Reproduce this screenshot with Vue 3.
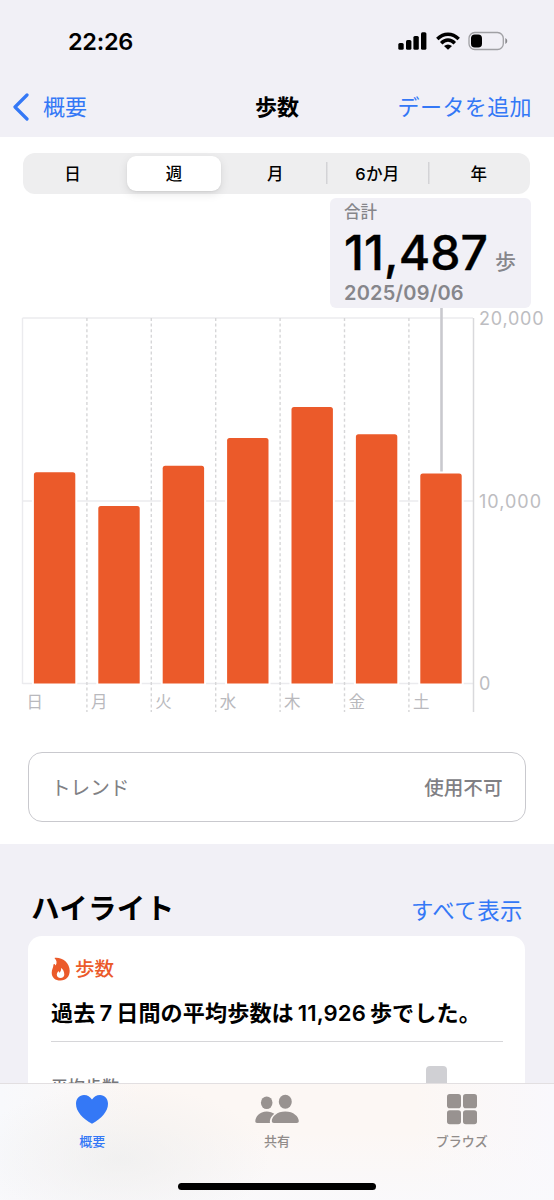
<script setup>
const ranges = ['日', '週', '月', '6か月', '年']
const days = [
  { name: '日', steps: 11560 },
  { name: '月', steps: 9710 },
  { name: '火', steps: 11920 },
  { name: '水', steps: 13440 },
  { name: '木', steps: 15130 },
  { name: '金', steps: 13640 },
  { name: '土', steps: 11487 },
]
const baseline = 375.5
const slot = 64.4
const left = 22.5
const bars = days.map((d, i) => {
  const h = (d.steps / 20000) * 365.5
  const x = left + 11.4 + i * slot
  const y = baseline - h
  return {
    ...d,
    grid: left + i * slot,
    x,
    y,
    path: `M${x} ${baseline}V${y + 2.5}q0-2.5 2.5-2.5h36.4q2.5 0 2.5 2.5V${baseline}z`,
  }
})
</script>

<template>
  <div class="screen">
    <header class="top">
      <div class="status">
        <span class="clock">22:26</span>
        <div class="indicators">
          <svg width="30" height="18" viewBox="0 0 30 18">
            <rect x="0.3" y="11" width="5.400" height="6.800" rx="1.500" />
            <rect x="8" y="8" width="5.400" height="9.800" rx="1.500" />
            <rect x="15.400" y="4" width="5.400" height="13.800" rx="1.500" />
            <rect x="23" y="0.3" width="5.400" height="17.500" rx="1.500" />
          </svg>
          <svg class="wifi" width="24" height="18" viewBox="0 0 24 18">
            <path d="M1.300 7Q6.100 2.200 12 2.200T22.700 7M5.200 11.200Q8.300 8 12 8t6.800 3.200" fill="none" stroke="#000" stroke-width="3.400" />
            <path d="M8 14Q9.900 12.400 12 12.400T16 14l-4 3.800z" />
          </svg>
          <svg width="40" height="20" viewBox="0 0 40 20">
            <rect x="1" y="1.500" width="34.300" height="17" rx="5.800" fill="none" stroke="#a0a0a4" stroke-width="1.300" />
            <rect x="3" y="3.500" width="11" height="13" rx="3.800" />
            <path d="M37.300 7q2 1 2 3t-2 3z" fill="#88888c" />
          </svg>
        </div>
      </div>
      <nav class="nav">
        <a class="back">
          <svg width="18" height="28" viewBox="0 0 18 28"><path d="M15 2L3 14l12 12" fill="none" stroke="#3478f6" stroke-width="3.200" stroke-linecap="round" stroke-linejoin="round" /></svg>
          <span>概要</span>
        </a>
        <h1>歩数</h1>
        <a class="add">データを追加</a>
      </nav>
    </header>

    <main class="panel">
      <div class="segments">
        <div v-for="(r, i) in ranges" :key="r" class="segment" :class="{ active: i === 1, divided: i > 2 }"><span>{{ r }}</span></div>
      </div>
      <div class="callout">
        <div class="caption">合計</div>
        <div class="total"><span class="number">11,487</span><span class="unit">歩</span></div>
        <div class="date">2025/09/06</div>
      </div>
      <svg class="chart" width="554" height="408" viewBox="0 0 554 408">
        <path d="M22.500 10H473M22.500 193H473M22.500 375.500H473M22.500 10V376" stroke="#ebebee" stroke-width="1.400" fill="none" />
        <path d="M473.500 10V404" stroke="#d9d9dc" stroke-width="1.500" />
        <line v-for="b in bars.slice(1)" :key="b.name" :x1="b.grid" :x2="b.grid" y1="10" y2="404" class="dash" />
        <path d="M441.500 0V165" stroke="#c9c9ce" stroke-width="2.600" />
        <g v-for="b in bars" :key="b.name">
          <path :d="b.path" stroke="#fff" stroke-width="4" />
          <path :d="b.path" fill="#eb5a2a" />
          <text :x="b.grid + 4" y="399.500" class="day">{{ b.name }}</text>
        </g>
        <text x="479" y="16.500" class="scale" textLength="64.500">20,000</text>
        <text x="479" y="199.500" class="scale" textLength="62">10,000</text>
        <text x="479" y="382" class="scale">0</text>
      </svg>
      <div class="trend"><span>トレンド</span><strong>使用不可</strong></div>
    </main>

    <section class="highlights">
      <div class="heading"><h2>ハイライト</h2><a>すべて表示</a></div>
      <article class="card">
        <div class="topic">
          <svg width="20" height="25" viewBox="0 0 20 25">
            <path fill-rule="evenodd" fill="#eb5a2a" d="M4 .8C11 .1 18.700 5.300 18.700 13.800c0 5.900-3.700 9.800-9.200 9.800C4.300 23.600.7 20.500.7 15.700c0-3.200 1.600-4.700 1.700-7.700 0-1 .9-1.300 1.500-.5l.7 1C6.300 6.200 5.700 3.200 3.800 1.600c-.4-.3-.2-.7.2-.8zM10 10.900c.5 2.400-.6 3.500-1.300 4.800-.7-.3-.9-.9-1-1.600-1.200 1-1.900 2.300-1.900 3.600 0 1.900 1.500 3.200 3.700 3.200s3.800-1.400 3.800-3.500c0-2.900-1.400-5.300-3.300-6.500z" />
          </svg>
          <span>歩数</span>
        </div>
        <p class="summary">過去<i>7</i>日間の平均歩数は<i>11,926</i>歩でした。</p>
        <div class="preview"><span>平均歩数</span><div class="stub"></div></div>
      </article>
    </section>

    <footer class="tabs">
      <div class="tab active">
        <svg width="46" height="36" viewBox="0 0 46 36"><path fill="#3478f6" d="M23 31.800C13.500 26.500 7 19.600 7 11.800 7 6.600 10.400 3 15 3c3.600 0 6.200 1.800 8 4.500C24.800 4.800 27.400 3 31 3c4.600 0 8 3.600 8 8.800 0 7.800-6.500 14.700-16 20z" /></svg>
        <span>概要</span>
      </div>
      <div class="tab">
        <svg width="46" height="36" viewBox="0 0 46 36" fill="#989290">
          <ellipse cx="12.700" cy="10.800" rx="5.800" ry="6.300" />
          <path d="M3 31c-1 0-1.700-.6-1.700-1.700 0-4.600 4.200-9.900 11.400-9.900 3.200 0 5.800 1 7.600 2.300-2.900 2.400-4.800 5.200-4.300 9.300z" />
          <ellipse cx="31.300" cy="9.700" rx="6.500" ry="7" />
          <path d="M20 31c-1.500 0-2.200-.7-2.200-1.900 0-4.600 5.200-9.700 13.500-9.700s13.500 5.100 13.500 9.700c0 1.200-.7 1.900-2.200 1.900z" />
        </svg>
        <span>共有</span>
      </div>
      <div class="tab">
        <svg width="46" height="36" viewBox="0 0 46 36" fill="#989290">
          <rect x="8" y="2" width="14" height="14.200" rx="2.800" /><rect x="24" y="2" width="14" height="14.200" rx="2.800" />
          <rect x="8" y="18.300" width="14" height="14" rx="2.800" /><rect x="24" y="18.300" width="14" height="14" rx="2.800" />
        </svg>
        <span>ブラウズ</span>
      </div>
      <div class="home"></div>
    </footer>
  </div>
</template>

<style>
body { background: #f1f0f6; }
</style>
<style scoped>
.screen { width: 554px; height: 1200px; overflow: hidden; display: flex; flex-direction: column; background: #f1f0f6; color: #000; font-family: Inter, "Noto Sans CJK JP", sans-serif; }
.screen * { box-sizing: border-box; }
h1, h2, p { margin: 0; }
i { font-style: normal; }
svg { display: block; flex: none; }
.top { height: 137px; flex: none; }
.status { height: 76px; padding: 6px 46px 0 68px; display: flex; justify-content: space-between; align-items: center; }
.clock { font-size: 23.5px; font-weight: 600; letter-spacing: -.3px; }
.indicators { display: flex; align-items: center; gap: 8px; }
.nav { height: 61px; display: grid; grid-template-columns: 1fr auto 1fr; align-items: center; padding: 1px 22px 0 12px; color: #3478f6; font-size: 22px; line-height: 32px; }
.back { display: flex; align-items: center; gap: 13px; }
.nav h1 { color: #000; font-size: 22px; font-weight: 700; margin-left: 10px; }
.add { text-align: right; white-space: nowrap; letter-spacing: .4px; }
.panel { height: 707px; flex: none; background: #fff; padding-top: 16px; display: flex; flex-direction: column; }
.segments { height: 41px; flex: none; margin: 0 24px 0 23px; background: #eeeeef; border-radius: 12px; display: grid; grid-template-columns: repeat(5, 1fr); padding: 3px 0; font-size: 16.500px; font-weight: 500; }
.segment { display: flex; align-items: center; justify-content: center; margin: 0 5px 0 3px; padding-bottom: 1px; letter-spacing: .3px; }
.segment.active { background: #fff; border-radius: 9px; box-shadow: 0 3px 10px rgba(0,0,0,.1), 0 1px 2px rgba(0,0,0,.06); }
.segment.divided { background: linear-gradient(#d3d3d6, #d3d3d6) 0 6px / 1.500px 22px no-repeat; margin-left: -1px; margin-right: 0; }
.callout { width: 201px; height: 110px; flex: none; margin: 4px 0 0 330px; padding: 4px 14px 0; border-radius: 6px; background: #f1f0f6; color: #86868b; white-space: nowrap; }
.caption { font-size: 16.500px; line-height: 21px; font-weight: 500; }
.total { height: 60px; display: flex; align-items: baseline; line-height: 60px; }
.number { width: 151px; color: #000; font-size: 48px; font-weight: 500; letter-spacing: .1px; -webkit-text-stroke: .4px #000; stroke-linejoin: round; }
.unit { font-size: 21px; font-weight: 500; position: relative; top: -1px; }
.date { font-size: 20px; font-weight: 600; line-height: 21px; letter-spacing: .2px; }
.dash { stroke: #d6d6d8; stroke-width: 1.400; stroke-dasharray: 3 2.600; }
.day { fill: #b9b9bd; font-size: 16.500px; }
.scale { fill: #bdbdc1; font-size: 18px; }
.trend { height: 70px; flex: none; margin: 36px 28.500px 0 28px; padding: 0 22px 2px; border: 1.500px solid #c9c9ce; border-radius: 14px; display: flex; justify-content: space-between; align-items: center; font-size: 19.600px; color: #808084; }
.trend strong { font-weight: 500; }
.highlights { height: 239px; flex: none; overflow: hidden; padding: 0 29px 0 28px; }
.heading { height: 92px; display: flex; justify-content: space-between; align-items: center; padding: 37px 2px 0 3px; }
.heading h2 { font-size: 28.500px; font-weight: 700; line-height: 40px; letter-spacing: .3px; }
.heading a { font-size: 22.400px; letter-spacing: .5px; color: #3478f6; padding-top: 5px; line-height: 30px; }
.card { height: 160px; background: #fff; border-radius: 14px; padding: 18px 22px 0 23px; }
.topic { height: 30px; display: flex; align-items: center; gap: 4px; color: #eb5a2a; font-size: 19.500px; font-weight: 500; line-height: 30px; }
.summary { height: 58px; line-height: 58px; border-bottom: 1px solid #d6d6d9; font-size: 22.100px; font-weight: 600; white-space: nowrap; letter-spacing: .1px; }
.summary i { margin: 0 4px; }
.preview { display: flex; justify-content: space-between; align-items: flex-start; font-size: 17px; line-height: 24px; color: #77777b; padding: 24px 56px 0 0; }
.preview span { padding-top: 9px; font-weight: 500; }
.stub { width: 21px; height: 40px; border-radius: 4px 4px 0 0; background: #d0d0d4; }
.tabs { height: 118px; flex: none; position: relative; border-top: 1.500px solid #e2dfe1; background: radial-gradient(ellipse 150px 75px at 120px 75px, rgba(238,238,238,.75), rgba(238,238,238,0)), linear-gradient(transparent 40%, rgba(249,249,252,.85)), linear-gradient(90deg, #f8f9fc, #fcf7f4 25%, #fcf7f4 75%, #f9f8fc); display: grid; grid-template-columns: repeat(3, 1fr); align-items: start; padding-top: 8px; }
.tab { display: flex; flex-direction: column; align-items: center; font-size: 13px; line-height: 20px; font-weight: 500; color: #918c8a; gap: 3px; }
.tab.active { color: #3478f6; }
.home { position: absolute; left: 178px; bottom: 11px; width: 198px; height: 7px; border-radius: 4px; background: #000; }
</style>
